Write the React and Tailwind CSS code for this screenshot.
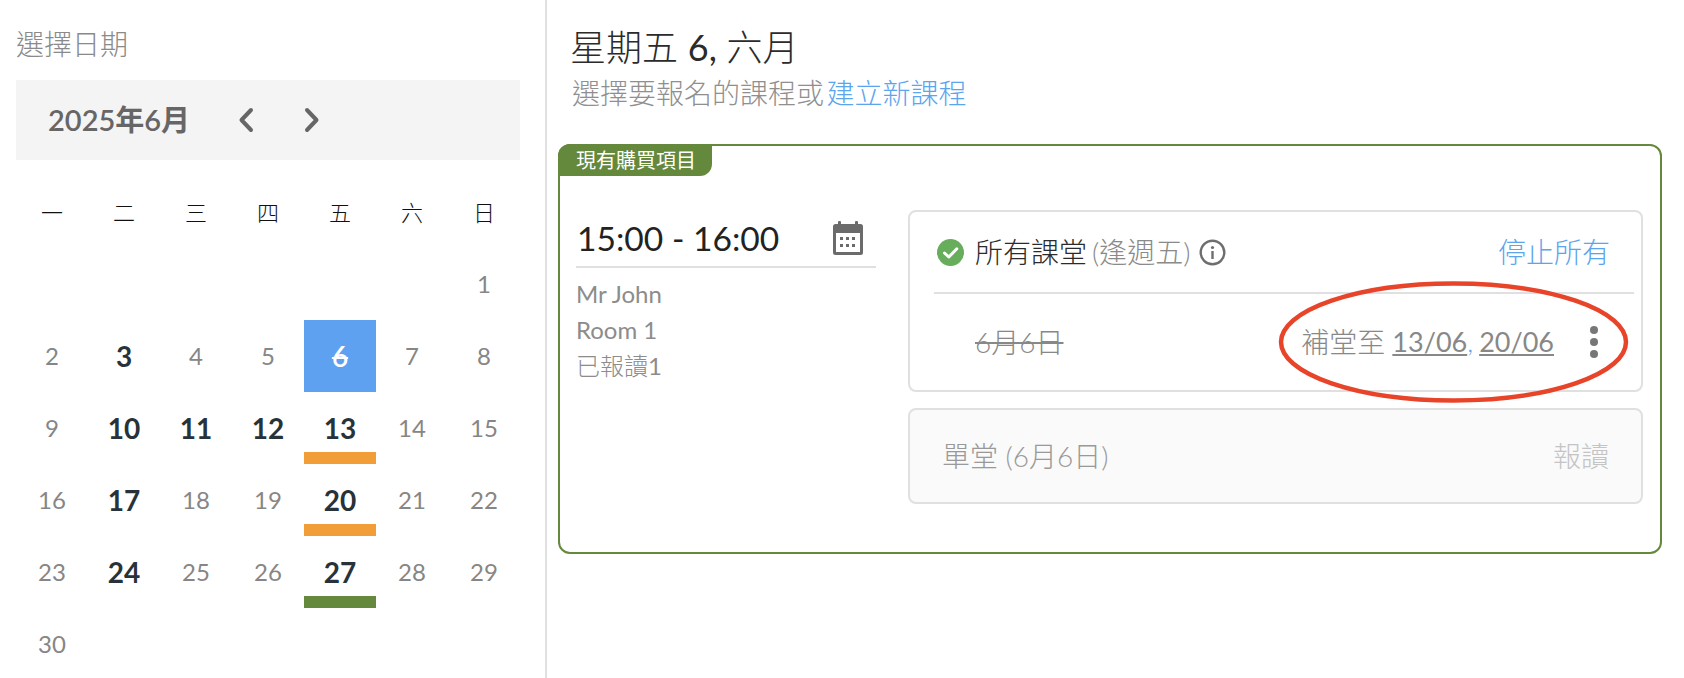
import React from "react";

const FONT = "font-['Lato','Noto_Sans_CJK_TC',sans-serif]";

const days = [
  [null, null, null, null, null, null, 1],
  [2, 3, 4, 5, 6, 7, 8],
  [9, 10, 11, 12, 13, 14, 15],
  [16, 17, 18, 19, 20, 21, 22],
  [23, 24, 25, 26, 27, 28, 29],
  [30, null, null, null, null, null, null],
].flat();

const bold = new Set([3, 10, 11, 12, 13, 17, 20, 24, 27]);
const bars = { 13: "bg-[#f19d38]", 20: "bg-[#f19d38]", 27: "bg-[#64883c]" };

function Day({ d }) {
  if (d === null) return <div />;
  const selected = d === 6;
  const tone = selected
    ? "text-white font-semibold text-[28px]"
    : bold.has(d)
      ? "text-[#27323a] font-bold text-[28px]"
      : "text-[#868686] font-normal text-[24px]";
  return (
    <div className={`flex flex-col pt-3 ${selected ? "bg-[#5ea1f0]" : ""}`}>
      <div className={`flex-1 flex items-center justify-center ${tone}`}>
        <span className={selected ? "line-through decoration-2" : ""}>{d}</span>
      </div>
      <div className={`h-3 ${bars[d] || ""}`} />
    </div>
  );
}

function Chevron({ flip }) {
  return (
    <svg width="16" height="26" viewBox="0 0 16 26" className={flip ? "rotate-180" : ""}>
      <path d="M13 3 L3.5 13 L13 23" fill="none" stroke="#666" strokeWidth="4" strokeLinecap="round" strokeLinejoin="round" />
    </svg>
  );
}

function CalIcon() {
  return (
    <svg width="30" height="34" viewBox="0 0 30 34">
      <rect x="5" y="0" width="3" height="6" rx="1" fill="#6b6b6b" />
      <rect x="22" y="0" width="3" height="6" rx="1" fill="#6b6b6b" />
      <rect x="0" y="3" width="30" height="31" rx="2.5" fill="#6b6b6b" />
      <rect x="3" y="12" width="24" height="19" fill="#fff" />
      {[7, 13, 19].map((x) => <rect key={x} x={x} y="16" width="3" height="3" fill="#6b6b6b" />)}
      {[7, 13, 19].map((x) => <rect key={x} x={x} y="23" width="3" height="3" fill="#6b6b6b" />)}
    </svg>
  );
}

function CheckIcon() {
  return (
    <svg width="27" height="27" viewBox="0 0 27 27">
      <circle cx="13.5" cy="13.5" r="13.5" fill="#67ad5b" />
      <path d="M7.5 14 L11.8 18 L19.8 9.8" fill="none" stroke="#fff" strokeWidth="3" strokeLinecap="round" strokeLinejoin="round" />
    </svg>
  );
}

function InfoIcon() {
  return (
    <svg width="27" height="27" viewBox="0 0 27 27">
      <circle cx="13.5" cy="13.5" r="11.8" fill="none" stroke="#6e6e6e" strokeWidth="2.4" />
      <rect x="12.3" y="12" width="2.4" height="8" fill="#6e6e6e" />
      <circle cx="13.5" cy="8.5" r="1.6" fill="#6e6e6e" />
    </svg>
  );
}

export default function App() {
  return (
    <div className={`${FONT} h-[678px] w-[1684px] overflow-hidden bg-white flex font-light`}>
      <aside className="w-[547px] h-[680px] shrink-0 border-r-2 border-[#e0e0e0] pl-4 pr-[25px]">
        <div className="pt-6 h-20 text-[28px] leading-10 text-[#8a8a8a]">選擇日期</div>
        <div className="h-20 bg-[#f4f4f4] flex items-center pl-8">
          <span className="text-[29px] font-semibold text-[#666] w-[190px]">2025年6月</span>
          <span className="flex gap-[50px]">
            <Chevron />
            <Chevron flip />
          </span>
        </div>
        <div className="mt-4 grid grid-cols-7 auto-rows-[72px] text-center">
          {["一", "二", "三", "四", "五", "六", "日"].map((w) => (
            <div key={w} className="flex items-center justify-center text-[22px] text-[#111]">{w}</div>
          ))}
          {days.map((d, i) => <Day key={i} d={d} />)}
        </div>
      </aside>

      <main className="flex-1 pl-[11px] relative">
        <div className="pl-3 pt-[22px] h-[144px]">
          <h1 className="text-[36px] leading-[50px] text-[#2b2b2b]">星期五 <span className="font-normal">6,</span> 六月</h1>
          <p className="text-[28px] leading-[44px] text-[#8f8f8f] pl-[2px] -mt-[1px]">
            選擇要報名的課程或 <span className="text-[#5aa5ee] -ml-[5px]">建立新課程</span>
          </p>
        </div>

        <section className="relative w-[1104px] h-[410px] border-2 border-[#64883c] rounded-xl flex pl-4 pt-16 pr-[17px] gap-8">
          <div className="absolute -top-[2px] -left-[2px] w-[154px] h-8 bg-[#64883c] rounded-tl-xl rounded-br-xl flex items-center pl-[18px] text-[20px] text-white font-normal">
            現有購買項目
          </div>

          <div className="w-[300px] shrink-0">
            <div className="h-[58px] border-b-2 border-[#e0e0e0] flex items-center justify-between pl-[1px] pr-[13px]">
              <span className="text-[33.6px] text-[#222] font-normal">15:00 - 16:00</span>
              <CalIcon />
            </div>
            <div className="pt-2 text-[24px] leading-[36px] text-[#8c8c8c] font-normal">
              <div>Mr John</div>
              <div>Room 1</div>
              <div className="font-light">已報讀<span className="font-normal">1</span></div>
            </div>
          </div>

          <div className="flex-1 flex flex-col gap-4">
            <div className="h-[182px] border-2 border-[#e0e0e0] rounded-lg">
              <div className="ml-6 mr-[7px] h-[82px] border-b-2 border-[#e0e0e0] flex items-center pl-[3px] pr-6">
                <CheckIcon />
                <span className="ml-[11px] text-[28px] text-[#2b2b2b]">所有課堂</span>
                <span className="ml-[5px] text-[28px] text-[#8a8a8a]">(逢週五)</span>
                <span className="ml-[9px] flex"><InfoIcon /></span>
                <span className="ml-auto text-[28px] text-[#5aa5ee]">停止所有</span>
              </div>
              <div className="h-[96px] flex items-center pl-[65px] pr-[43px]">
                <span className="text-[28px] text-[#888] line-through">6月6日</span>
                <span className="ml-auto text-[28px] text-[#888]">補堂至</span>
                <span className="ml-[7px] text-[27px] text-[#888] font-normal underline">13/06</span>
                <span className="text-[27px] text-[#5aa5ee]">,</span>
                <span className="ml-[6px] text-[27px] text-[#888] font-normal underline">20/06</span>
                <span className="ml-[36px] flex flex-col gap-1">
                  <i className="block w-2 h-2 rounded-full bg-[#777]" />
                  <i className="block w-2 h-2 rounded-full bg-[#777]" />
                  <i className="block w-2 h-2 rounded-full bg-[#777]" />
                </span>
              </div>
            </div>
            <div className="h-[96px] bg-[#fafafa] border-2 border-[#e0e0e0] rounded-lg flex items-center justify-between pl-8 pr-8 text-[28px]">
              <span className="text-[#999]">單堂 (6月6日)</span>
              <span className="text-[#c4c4c4]">報讀</span>
            </div>
          </div>

          <svg className="absolute left-[718px] top-[134px] pointer-events-none" width="351" height="124" viewBox="0 0 351 124">
            <ellipse cx="175.5" cy="62" rx="172.5" ry="58.5" fill="none" stroke="#e8442a" strokeWidth="4.5" />
          </svg>
        </section>
      </main>
    </div>
  );
}
